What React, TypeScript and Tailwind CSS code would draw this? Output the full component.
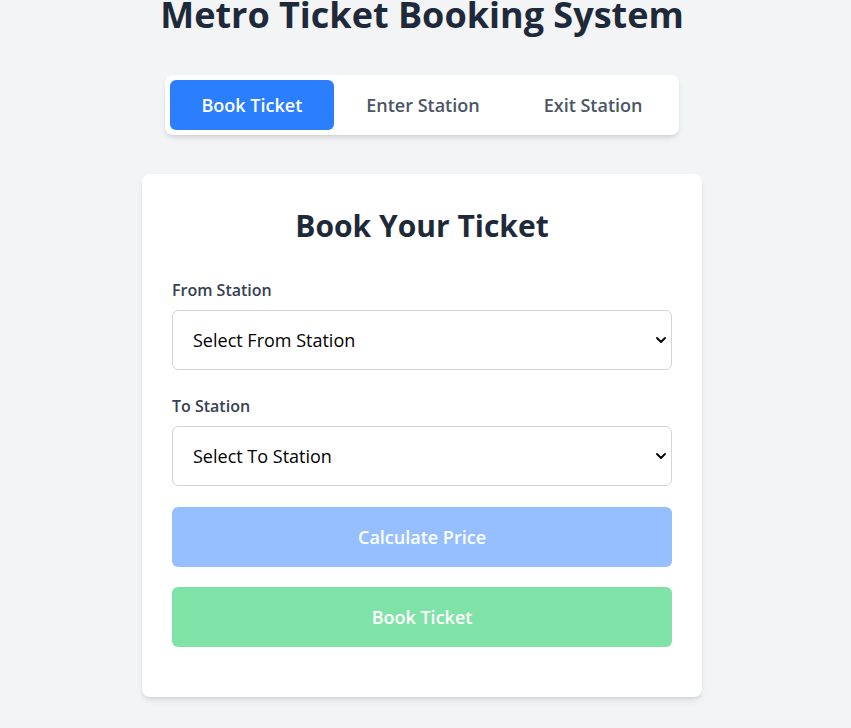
import { useState } from 'react';

const stations = ['Central', 'Park Street', 'Airport', 'City Mall', 'University'];

function Chevron() {
  return (
    <svg
      className="pointer-events-none absolute right-[6px] top-1/2 h-[10px] w-[10px] -translate-y-1/2 text-black"
      viewBox="0 0 10 10"
      fill="none"
      stroke="currentColor"
      strokeWidth={1.8}
    >
      <path d="M1 3L5 7l4-4" strokeLinecap="round" strokeLinejoin="round" />
    </svg>
  );
}

function StationSelect({
  label,
  placeholder,
  value,
  onChange,
}: {
  label: string;
  placeholder: string;
  value: string;
  onChange: (v: string) => void;
}) {
  return (
    <div>
      <label className="mb-2 block text-base leading-6 font-semibold text-gray-700">{label}</label>
      <div className="relative">
        <select
          value={value}
          onChange={(e) => onChange(e.target.value)}
          className="h-[60px] w-full appearance-none rounded-md border border-gray-300 bg-white pl-5 pr-10 text-lg text-black outline-none"
        >
          <option value="">{placeholder}</option>
          {stations.map((s) => (
            <option key={s} value={s}>
              {s}
            </option>
          ))}
        </select>
        <Chevron />
      </div>
    </div>
  );
}

export default function App() {
  const [tab, setTab] = useState('book');
  const [from, setFrom] = useState('');
  const [to, setTo] = useState('');
  const ready = from !== '' && to !== '' && from !== to;

  const tabs = [
    { id: 'book', label: 'Book Ticket' },
    { id: 'enter', label: 'Enter Station' },
    { id: 'exit', label: 'Exit Station' },
  ];

  return (
    <div className="min-h-[728px] bg-gray-100 pr-[7px] font-['Open_Sans',sans-serif]">
      <div className="flex flex-col items-center">
        <h1 className="-mt-[5px] text-4xl leading-10 font-bold text-gray-800">Metro Ticket Booking System</h1>

        <div className="mt-[40px] flex rounded-lg bg-white p-[5px] shadow-md">
          {tabs.map((t) => (
            <button
              key={t.id}
              onClick={() => setTab(t.id)}
              className={`h-[50px] rounded-md px-8 text-lg font-semibold ${
                tab === t.id ? 'bg-blue-500 text-white' : 'text-gray-600'
              }`}
            >
              {t.label}
            </button>
          ))}
        </div>

        <div className="mt-[39px] w-[560px] rounded-lg bg-white px-[30px] pt-[34px] pb-[50px] shadow-md">
          <h2 className="mb-[34px] text-center text-3xl leading-9 font-bold text-gray-800">Book Your Ticket</h2>

          <StationSelect label="From Station" placeholder="Select From Station" value={from} onChange={setFrom} />
          <div className="mt-6">
            <StationSelect label="To Station" placeholder="Select To Station" value={to} onChange={setTo} />
          </div>

          <button
            disabled={!ready}
            className="mt-[21px] h-[60px] w-full rounded-md bg-blue-500 text-lg font-semibold text-white disabled:bg-blue-500/50"
          >
            Calculate Price
          </button>
          <button
            disabled={!ready}
            className="mt-5 h-[60px] w-full rounded-md bg-green-500 text-lg font-semibold text-white disabled:bg-green-500/50"
          >
            Book Ticket
          </button>
        </div>
      </div>
    </div>
  );
}
